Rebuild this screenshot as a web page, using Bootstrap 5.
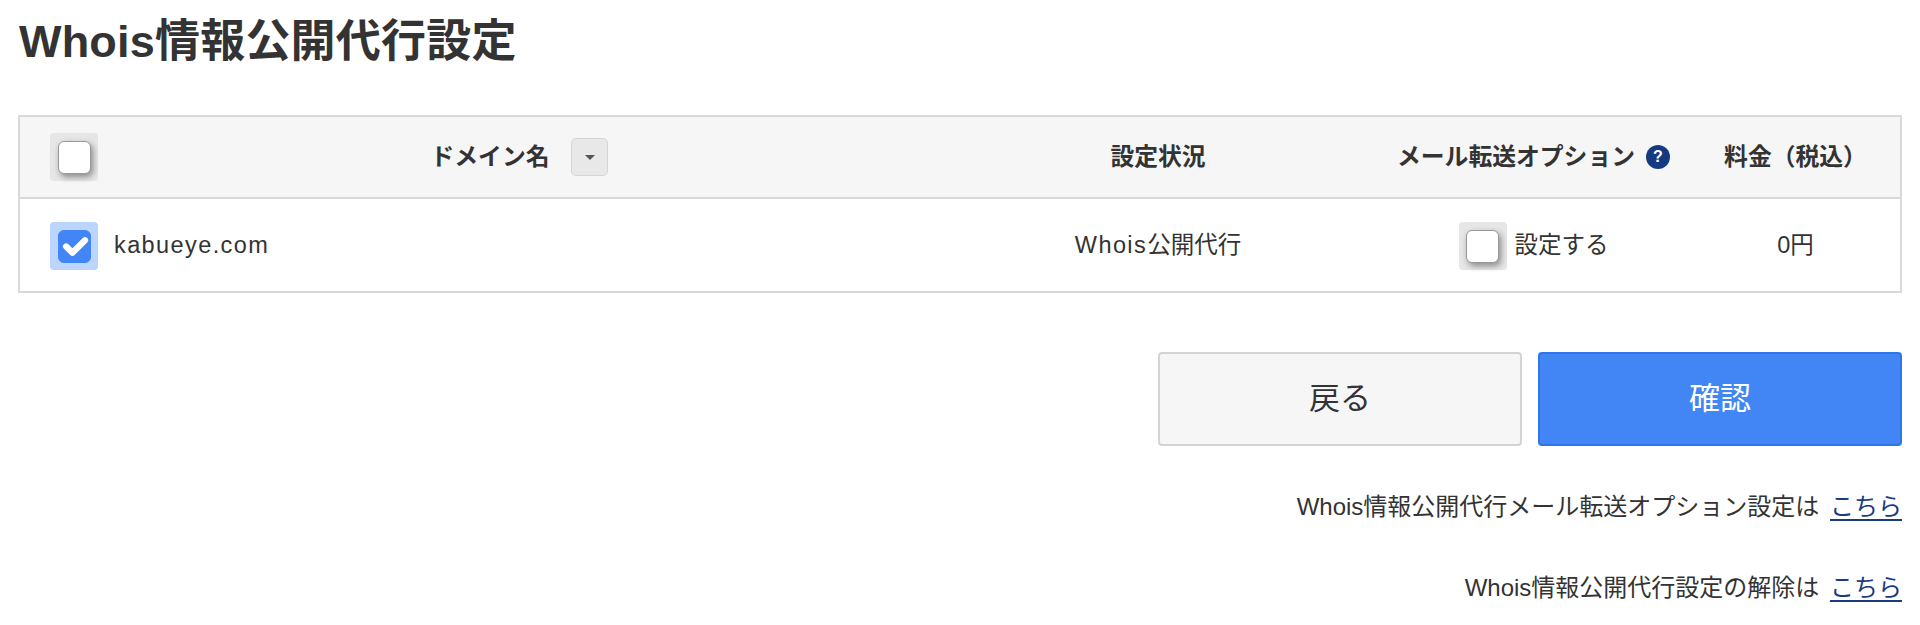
<!DOCTYPE html>
<html lang="ja">
<head>
    <meta charset="UTF-8">
    <meta name="viewport" content="width=device-width, initial-scale=1.0">
    <title>Whois情報公開代行設定</title>
    <link href="https://cdn.jsdelivr.net/npm/bootstrap@5.3.3/dist/css/bootstrap.min.css" rel="stylesheet">
    <style>
        body {
            font-family: "Liberation Sans", "Noto Sans CJK JP", sans-serif;
            font-size: 23.5px;
            color: #333;
        }
        .page-wrap { padding: 0 18px; }
        .page-title {
            font-size: 45px;
            font-weight: 700;
            line-height: 60px;
            letter-spacing: .2px;
            margin: 12px 0 43px 1px;
        }
        .domain-table {
            table-layout: fixed;
            width: 1884px;
            margin-bottom: 59px;
            border: 2px solid #d9d9d9;
        }
        .domain-table th {
            background: #f6f6f6;
            height: 82px;
            font-weight: 700;
            font-size: 23.8px;
            padding: 0;
            text-align: center;
            vertical-align: middle;
            border-bottom: 2px solid #d9d9d9;
        }
        .domain-table td {
            height: 94px;
            padding: 2px 0 0;
            text-align: center;
            vertical-align: middle;
        }
        .col-domain { width: 926px; }
        .col-status { width: 426px; }
        .col-mail { width: 320px; }
        .domain-table .domain-cell { padding-left: 30px; }
        .domain-title { padding-right: 4px; gap: 22px; }
        .domain-table .mail-cell { padding-left: 5px; }
        .latin-wide { letter-spacing: 1.4px; }
        .check-wrap {
            width: 48px;
            height: 48px;
            border-radius: 4px;
            background: #e6e6e6;
            flex-shrink: 0;
        }
        .check-wrap.on { background: #bcd5ff; }
        .check-wrap .form-check-input {
            width: 33px;
            height: 33px;
            margin: 0;
            border: 1px solid #999;
            border-radius: 6px;
            box-shadow: 2px 3px 6px rgba(0, 0, 0, .4);
        }
        .check-wrap .form-check-input:checked {
            background-color: #4285f4;
            border-color: #4285f4;
            background-size: 135%;
            box-shadow: none;
        }
        .sort-btn {
            width: 37px;
            height: 38px;
            background: #e8e8e8;
            border: 1px solid #d4d4d4;
            border-radius: 5px;
        }
        .sort-caret {
            width: 0;
            height: 0;
            border-left: 5px solid transparent;
            border-right: 5px solid transparent;
            border-top: 5px solid #555;
        }
        .mail-title { gap: 11px; }
        .help-icon {
            width: 24px;
            height: 24px;
            background: #143a82;
            color: #fff;
            font-size: 16px;
            font-weight: 700;
        }
        .action-btn {
            width: 364px;
            height: 94px;
            font-size: 31px;
            border-radius: 4px;
        }
        .btn-back {
            background: #f6f6f6;
            border: 2px solid #d4d4d4;
            color: #333;
        }
        .btn-confirm {
            background: #4285f4;
            border: 2px solid #2f76ee;
            color: #fff;
        }
        .note-line {
            text-align: right;
            font-size: 24px;
            line-height: 32px;
            margin: 0;
        }
        .note-line a {
            color: #1a3a82;
            margin-left: 4px;
            text-underline-offset: 4px;
        }
        .note-first { margin-top: 45px; margin-bottom: 49px; }
    </style>
</head>
<body>
    <div class="page-wrap">
        <h1 class="page-title">Whois情報公開代行設定</h1>

        <table class="domain-table">
            <thead>
                <tr>
                    <th class="col-domain domain-cell">
                        <div class="d-flex align-items-center">
                            <span class="check-wrap d-flex align-items-center justify-content-center">
                                <input class="form-check-input" type="checkbox">
                            </span>
                            <div class="domain-title flex-fill d-flex align-items-center justify-content-center">
                                <span>ドメイン名</span>
                                <button type="button" class="sort-btn d-flex align-items-center justify-content-center p-0"><span class="sort-caret"></span></button>
                            </div>
                        </div>
                    </th>
                    <th class="col-status">設定状況</th>
                    <th class="col-mail mail-cell">
                        <span class="mail-title d-inline-flex align-items-center text-nowrap">メール転送オプション <span class="help-icon rounded-circle d-inline-flex align-items-center justify-content-center">?</span></span>
                    </th>
                    <th>料金（税込）</th>
                </tr>
            </thead>
            <tbody>
                <tr>
                    <td class="domain-cell">
                        <div class="d-flex align-items-center gap-3">
                            <span class="check-wrap on d-flex align-items-center justify-content-center">
                                <input class="form-check-input" type="checkbox" checked>
                            </span>
                            <span class="latin-wide">kabueye.com</span>
                        </div>
                    </td>
                    <td><span class="latin-wide">Whois</span>公開代行</td>
                    <td class="mail-cell">
                        <div class="d-flex align-items-center justify-content-center gap-2">
                            <span class="check-wrap d-flex align-items-center justify-content-center">
                                <input class="form-check-input" type="checkbox">
                            </span>
                            <span>設定する</span>
                        </div>
                    </td>
                    <td>0円</td>
                </tr>
            </tbody>
        </table>

        <div class="d-flex justify-content-end gap-3">
            <button type="button" class="btn action-btn btn-back">戻る</button>
            <button type="button" class="btn action-btn btn-confirm">確認</button>
        </div>

        <p class="note-line note-first">Whois情報公開代行メール転送オプション設定は <a href="#">こちら</a></p>
        <p class="note-line">Whois情報公開代行設定の解除は <a href="#">こちら</a></p>
    </div>

    <script src="https://cdn.jsdelivr.net/npm/bootstrap@5.3.3/dist/js/bootstrap.bundle.min.js"></script>
</body>
</html>
